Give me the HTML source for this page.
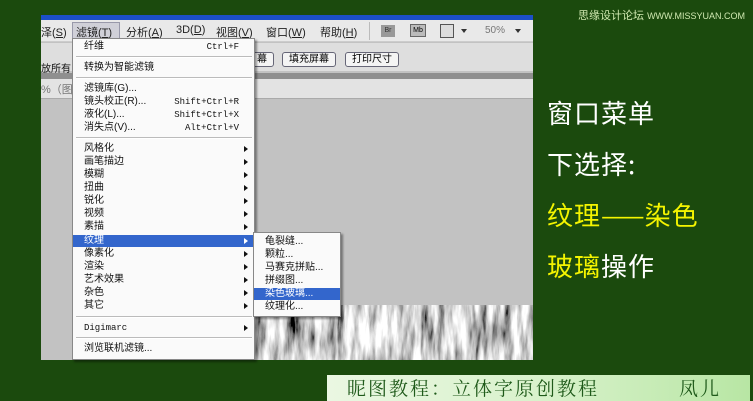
<!DOCTYPE html>
<html><head><meta charset="utf-8"><style>
*{margin:0;padding:0;box-sizing:border-box}
body{width:753px;height:401px;background:#1b4a0d;position:relative;overflow:hidden;font-family:"Liberation Sans","Noto Sans CJK SC",sans-serif}
.a{position:absolute}
.ps{left:41px;top:15px;width:492px;height:345px;background:#c2c2c2;overflow:hidden}
.mi{position:absolute;left:84px;font-size:10px;color:#111;line-height:12px;white-space:nowrap}
.sc{position:absolute;right:0;font-family:"Liberation Mono",monospace;font-size:9px}
.arr{position:absolute;left:244px;width:0;height:0;border-left:4px solid #111;border-top:3px solid transparent;border-bottom:3px solid transparent}
.sep{position:absolute;left:76px;width:176px;height:2px;border-top:1px solid #bbb;border-bottom:1px solid #fff}
.big{position:absolute;left:547px;font-size:26px;color:#fff;letter-spacing:1px;font-family:"Noto Sans CJK SC",sans-serif;white-space:nowrap}
.btn{position:absolute;top:52px;height:15px;border:1px solid #667;border-radius:3px;background:#f4f4f4;font-size:10px;line-height:13px;padding:0 6px}
</style></head><body>
<div class="a ps">
  <div class="a" style="left:0;top:0;width:492px;height:5px;background:#1c4fc7"></div>
  <div class="a" style="left:0;top:5px;width:492px;height:22px;background:#e9e9e9;border-bottom:1px solid #ccc"></div>
  <div class="a" style="left:0;top:28px;width:492px;height:28px;background:#dedede"></div>
  <div class="a" style="left:0;top:58px;width:492px;height:6px;background:#8f8f8f"></div>
  <div class="a" style="left:0;top:64px;width:492px;height:20px;background:#e3e3e3;border-bottom:1px solid #aaa"></div>
  <div class="a" style="left:0;top:66px;font-size:11px;color:#777">%（图</div>
  <div class="a" style="left:0;top:45px;font-size:10px;color:#111">放所有</div>
</div>
<div class="a" style="left:41px;top:24px;font-size:11px;color:#222;white-space:nowrap">泽(<u>S</u>)</div>
<div class="a" style="left:72px;top:22px;width:48px;height:18px;background:#d0d0d8;border:1px solid #99a"></div>
<div class="a" style="left:76px;top:24px;font-size:11px;color:#222;white-space:nowrap">滤镜(<u>T</u>)</div>
<div class="a" style="left:126px;top:24px;font-size:11px;color:#222;white-space:nowrap">分析(<u>A</u>)</div>
<div class="a" style="left:176px;top:24px;font-size:11px;color:#222;white-space:nowrap">3D(<u>D</u>)</div>
<div class="a" style="left:216px;top:24px;font-size:11px;color:#222;white-space:nowrap">视图(<u>V</u>)</div>
<div class="a" style="left:266px;top:24px;font-size:11px;color:#222;white-space:nowrap">窗口(<u>W</u>)</div>
<div class="a" style="left:320px;top:24px;font-size:11px;color:#222;white-space:nowrap">帮助(<u>H</u>)</div>
<div class="a" style="left:369px;top:22px;width:1px;height:18px;background:#bbb"></div>
<div class="a" style="left:381px;top:25px;width:14px;height:12px;background:#999;font-size:7px;color:#333;text-align:center;line-height:12px">Br</div>
<div class="a" style="left:410px;top:24px;width:16px;height:13px;background:#bbb;border:1px solid #666;font-size:7px;text-align:center;line-height:11px">Mb</div>
<div class="a" style="left:440px;top:24px;width:14px;height:14px;border:1px solid #555;background:#ddd"></div>
<div class="a" style="left:461px;top:29px;border-top:4px solid #333;border-left:3px solid transparent;border-right:3px solid transparent"></div>
<div class="a" style="left:485px;top:25px;font-size:10px;color:#777">50%</div>
<div class="a" style="left:515px;top:29px;border-top:4px solid #333;border-left:3px solid transparent;border-right:3px solid transparent"></div>
<div class="btn" style="left:250px">幕</div>
<div class="btn" style="left:282px">填充屏幕</div>
<div class="btn" style="left:345px">打印尺寸</div>
<svg class="a" style="left:255px;top:305px" width="278" height="55"><defs><filter id="n"><feTurbulence type="fractalNoise" baseFrequency="0.12 0.02" numOctaves="4"/><feColorMatrix type="saturate" values="0"/><feComponentTransfer><feFuncR type="linear" slope="3" intercept="-0.85"/><feFuncG type="linear" slope="3" intercept="-0.85"/><feFuncB type="linear" slope="3" intercept="-0.85"/><feFuncA type="linear" slope="0" intercept="1"/></feComponentTransfer></filter></defs><rect width="278" height="55" filter="url(#n)"/></svg>
<!-- menu -->
<div class="a" style="left:72px;top:38px;width:183px;height:322px;background:#fafafa;border:1px solid #888;box-shadow:2px 2px 2px rgba(0,0,0,.4)"></div>
<div class="a" style="left:73px;top:235px;width:180px;height:12px;background:#3366cc"></div>
<div class="mi" style="top:41px;width:155px">纤维<span class="sc">Ctrl+F</span></div>
<div class="sep" style="top:56px"></div>
<div class="mi" style="top:62px">转换为智能滤镜</div>
<div class="sep" style="top:77px"></div>
<div class="mi" style="top:83px">滤镜库(G)...</div>
<div class="mi" style="top:96px;width:155px">镜头校正(R)...<span class="sc">Shift+Ctrl+R</span></div>
<div class="mi" style="top:109px;width:155px">液化(L)...<span class="sc">Shift+Ctrl+X</span></div>
<div class="mi" style="top:122px;width:155px">消失点(V)...<span class="sc">Alt+Ctrl+V</span></div>
<div class="sep" style="top:137px"></div>
<div class="mi" style="top:143px">风格化</div><div class="arr" style="top:146px"></div>
<div class="mi" style="top:156px">画笔描边</div><div class="arr" style="top:159px"></div>
<div class="mi" style="top:169px">模糊</div><div class="arr" style="top:172px"></div>
<div class="mi" style="top:182px">扭曲</div><div class="arr" style="top:185px"></div>
<div class="mi" style="top:195px">锐化</div><div class="arr" style="top:198px"></div>
<div class="mi" style="top:208px">视频</div><div class="arr" style="top:211px"></div>
<div class="mi" style="top:221px">素描</div><div class="arr" style="top:224px"></div>
<div class="mi" style="top:235px;color:#fff">纹理</div><div class="arr" style="top:238px;border-left-color:#fff"></div>
<div class="mi" style="top:248px">像素化</div><div class="arr" style="top:251px"></div>
<div class="mi" style="top:261px">渲染</div><div class="arr" style="top:264px"></div>
<div class="mi" style="top:274px">艺术效果</div><div class="arr" style="top:277px"></div>
<div class="mi" style="top:287px">杂色</div><div class="arr" style="top:290px"></div>
<div class="mi" style="top:300px">其它</div><div class="arr" style="top:303px"></div>
<div class="sep" style="top:316px"></div>
<div class="mi" style="top:322px;font-family:'Liberation Mono',monospace;font-size:9px">Digimarc</div><div class="arr" style="top:325px"></div>
<div class="sep" style="top:337px"></div>
<div class="mi" style="top:343px">浏览联机滤镜...</div>
<!-- submenu -->
<div class="a" style="left:253px;top:232px;width:88px;height:85px;background:#fafafa;border:1px solid #888;box-shadow:2px 2px 2px rgba(0,0,0,.4)"></div>
<div class="a" style="left:254px;top:288px;width:86px;height:12px;background:#3366cc"></div>
<div class="mi" style="left:265px;top:236px">龟裂缝...</div>
<div class="mi" style="left:265px;top:249px">颗粒...</div>
<div class="mi" style="left:265px;top:262px">马赛克拼贴...</div>
<div class="mi" style="left:265px;top:275px">拼缀图...</div>
<div class="mi" style="left:265px;top:288px;color:#fff">染色玻璃...</div>
<div class="mi" style="left:265px;top:301px">纹理化...</div>
<!-- right text -->
<div class="big" style="top:94px">窗口菜单</div>
<div class="big" style="top:145px">下选择:</div>
<div class="big" style="top:196px;color:#f4f400">纹理<span style="letter-spacing:0">——</span>染色</div>
<div class="big" style="top:247px"><span style="color:#f4f400">玻璃</span>操作</div>
<div class="a" style="left:578px;top:7px;font-size:11px;color:#cfe8b0;white-space:nowrap">思缘设计论坛 <span style="font-size:9px">WWW.MISSYUAN.COM</span></div>
<div class="a" style="left:327px;top:375px;width:423px;height:26px;background:linear-gradient(90deg,#eaf7e2,#d9f2cc 50%,#b8e6a4);font-size:19px;color:#1f5a1a;line-height:26px;padding-left:20px;white-space:nowrap;letter-spacing:2px;font-family:'Noto Serif CJK SC',serif">昵图教程：立体字原创教程<span style="margin-left:80px">凤儿</span></div>
</body></html>
